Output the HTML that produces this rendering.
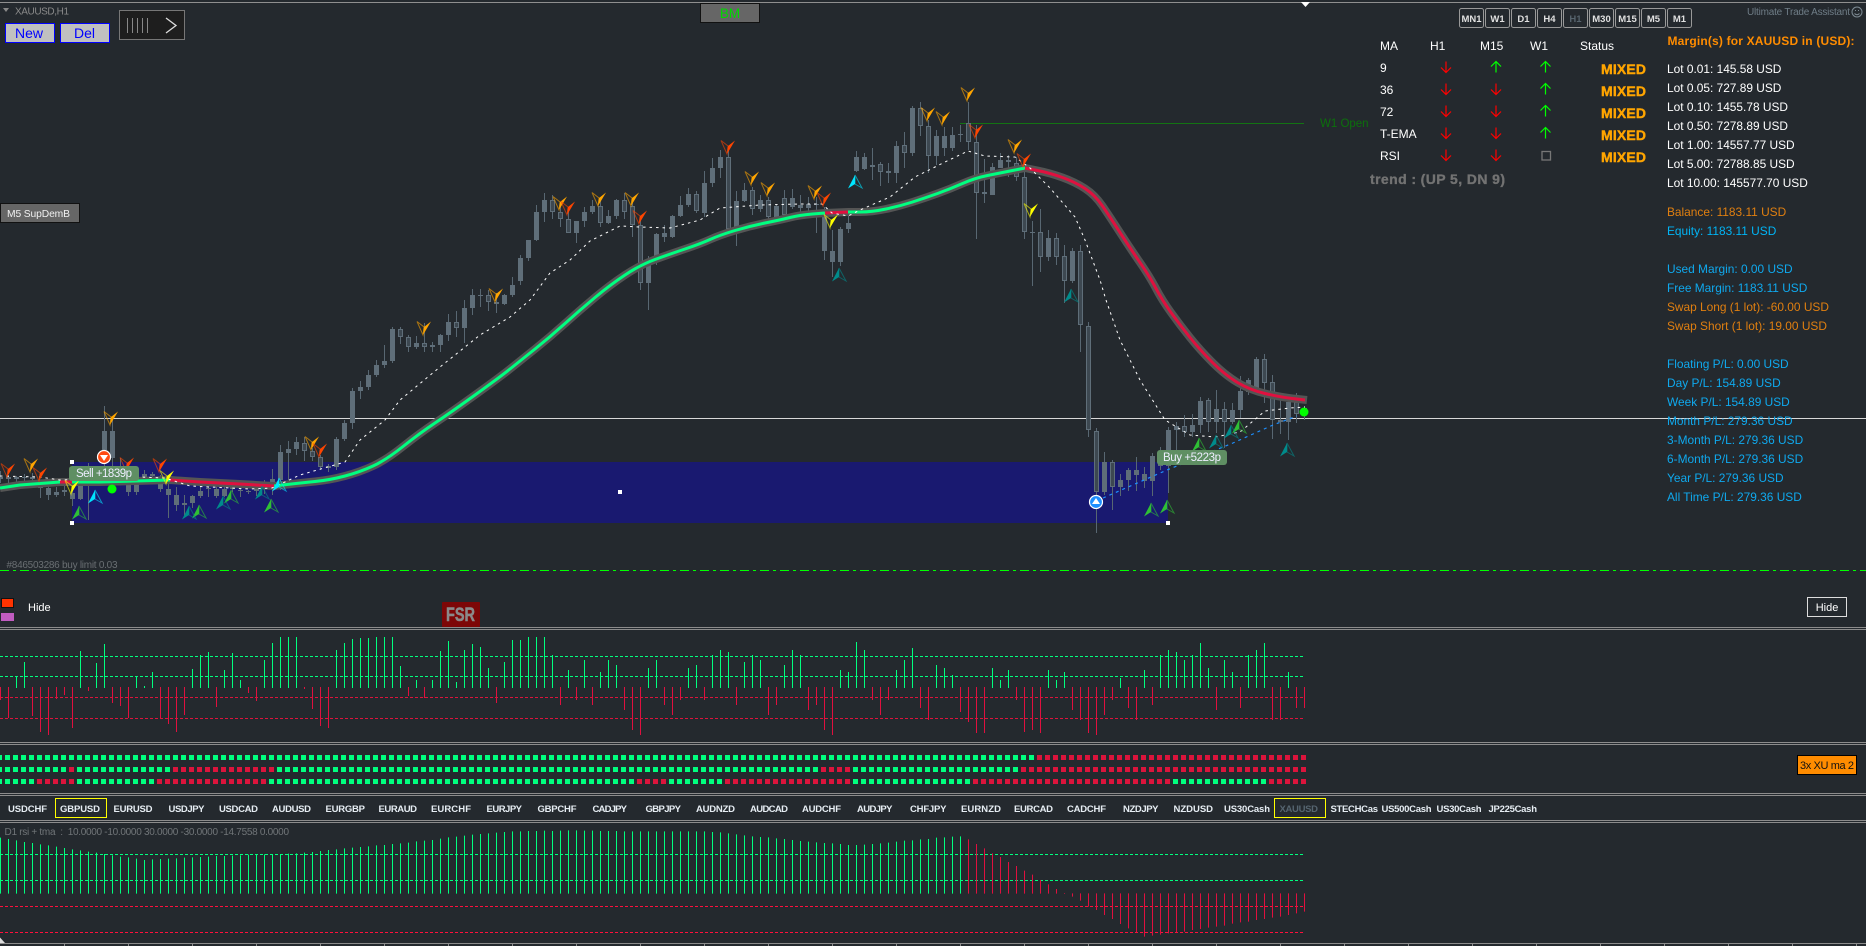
<!DOCTYPE html>
<html><head><meta charset="utf-8"><title>XAUUSD,H1</title>
<style>
html,body{margin:0;padding:0;background:#24292e;overflow:hidden}
svg{display:block}
text{font-family:"Liberation Sans",Arial,sans-serif}
.sy{font-size:9.5px;font-weight:700;fill:#e6edf3}
.tf{font-size:9.5px;font-weight:700;fill:#e0e0e0;text-anchor:middle}
.r{font-size:11.9px}
.w{fill:#fff}.b{fill:#0fa9ee}.o{fill:#e07f10}
.mx{font-size:14px;font-weight:700;fill:#ffa500;stroke:#ffa500;stroke-width:.4px}
.t{font-size:12px;fill:#fff}
</style></head><body>
<svg width="1866" height="946" viewBox="0 0 1866 946" xmlns="http://www.w3.org/2000/svg">
<defs>
<g id="d"><path d="M-7-6.500L0-1L-1 7Z" fill="none" stroke="currentColor" stroke-opacity=".6"/><path d="M7-6.500L0-1L-1 7Z" fill="currentColor"/></g>
<g id="u"><path d="M7 6L0 2L0-7Z" fill="none" stroke="currentColor" stroke-opacity=".6"/><path d="M-7 6.500L0 2L0-7Z" fill="currentColor"/></g>
<g id="ad" fill="none" stroke="#f00" stroke-width="1.2"><path d="M0-5.500V5.500M-5 .5L0 5.500L5 .5"/></g>
<g id="au" fill="none" stroke="#0f0" stroke-width="1.200"><path d="M0 5.500V-5.500M-5-.5L0-5.500L5-.5"/></g>
</defs>
<rect width="1866" height="946" fill="#24292e"/>
<rect y="2" width="1866" height="1" fill="#8f8f8f"/>
<path d="M1301 2H1310L1305.500 7Z" fill="#fff"/>

<!-- demand zone -->
<rect x="72" y="462" width="1096" height="61" fill="#191970"/>

<!-- horizontal levels -->
<rect y="418" width="1866" height="1" fill="#d8d8d8"/>
<rect x="960" y="123" width="344" height="1" fill="#137313"/>
<text x="1320" y="127" font-size="11.500" fill="#0c700c">W1 Open</text>
<path d="M0 570.500H1866" stroke="#0f0" stroke-width="1" stroke-dasharray="9 4 3 4" shape-rendering="crispEdges"/>

<!-- candles -->
<g transform="translate(.5 0)" shape-rendering="crispEdges" fill="none">
<path stroke="#586772" d="M0 471V483M8 475V485M16 476V482M24 474V483M32 473V484M40 480V498M48 483V500M56 487V497M64 480V496M72 480V506M80 470V500M88 463V520M96 470V483M104 406V470M112 418V466M120 458V484M128 462V496M136 470V495M144 470V480M152 472V480M160 475V492M168 480V518M176 487V511M184 495V517M192 495V508M200 485V498M208 480V497M216 487V498M224 487V497M232 484V492M240 487V497M248 490V494M256 487V496M264 480V494M272 469V495M280 445V490M288 441V480M296 437V455M304 437V461M312 448V461M320 455V470M328 464V472M336 437V470M344 420V441M352 388V429M360 381V399M368 370V390M376 360V377M384 345V368M392 327V363M400 327V344M408 335V352M416 336V349M424 323V352M432 342V352M440 334V352M448 314V341M456 311V337M464 300V343M472 289V315M480 289V307M488 290V311M496 293V313M504 294V305M512 277V297M520 255V285M528 240V261M536 205V241M544 193V222M552 195V219M560 207V227M568 207V233M576 221V243M584 207V227M592 200V214M600 200V227M608 210V224M616 199V219M624 193V219M632 200V237M640 220V290M648 256V310M656 233V265M664 225V242M672 215V238M680 196V217M688 188V207M696 191V213M704 171V217M712 158V187M720 150V178M728 150V232M736 191V246M744 183V202M752 187V215M760 195V212M768 197V219M776 205V222M784 190V218M792 189V209M800 195V212M808 197V212M816 197V233M824 207V260M832 230V277M840 227V266M848 213V233M856 151V172M864 153V170M872 148V180M880 162V186M888 163V183M896 141V183M904 132V168M912 106V156M920 102V136M928 120V173M936 130V165M944 127V156M952 127V151M960 125V142M968 102V150M976 125V239M984 159V203M992 163V195M1000 153V168M1008 155V177M1016 157V181M1024 170V239M1032 221V286M1040 209V272M1048 230V261M1056 233V265M1064 245V303M1072 248V283M1080 245V352M1088 322V437M1096 428V533M1104 452V495M1112 460V510M1120 474V496M1128 468V491M1136 457V491M1144 467V488M1152 453V496M1160 447V470M1168 427V493M1176 422V450M1184 415V437M1192 414V437M1200 397V433M1208 398V432M1216 390V433M1224 402V448M1232 403V424M1240 376V418M1248 378V395M1256 357V393M1264 354V403M1272 375V439M1280 400V434M1288 398V440M1296 393V423M1304 406V420"/>
<path stroke="#5f6e79" stroke-width="5" d="M0 477V479M8 477V479M16 477V479M24 477V478M32 477V479M40 485V488M48 488V495M56 492V495M64 490V492M72 493V499M80 485V499M88 470V478M96 475V480M104 431V450M112 431V458M120 470V480M128 483V492M136 483V492M144 474V477M152 474V476M160 484V489M168 489V495M176 495V505M184 503V505M192 496V503M200 491V496M208 488V489M216 489V496M224 489V496M232 487V489M240 490V491M248 491V492M256 488V491M264 484V487M272 479V483M280 452V480M288 449V453M296 442V449M304 443V451M312 451V457M320 457V467M328 466V468M336 439V467M344 423V439M352 391V423M360 387V391M368 375V387M376 365V375M384 361V365M392 329V361M400 329V337M408 337V347M416 343V347M424 343V347M432 345V347M440 335V345M448 322V335M456 322V328M464 308V328M472 295V308M480 295V296M488 295V302M496 302V304M504 295V304M512 285V295M520 258V281M528 240V258M536 212V240M544 200V212M552 200V212M560 212V219M568 219V233M576 221V233M584 212V221M592 206V212M600 206V223M608 216V223M616 200V216M624 200V212M632 206V225M640 225V283M648 265V283M656 234V257M664 233V237M672 216V237M680 205V216M688 194V205M696 194V211M704 183V213M712 168V183M720 157V168M728 157V229M736 201V229M744 190V201M752 190V209M760 200V209M768 200V217M776 206V217M784 198V215M792 198V207M800 205V208M808 204V208M816 204V205M824 216V251M832 251V262M840 229V262M848 223V229M856 157V171M864 157V169M872 165V167M880 164V172M888 171V173M896 146V173M904 145V153M912 108V153M920 108V126M928 126V156M936 136V156M944 136V148M952 135V148M960 134V135M968 123V142M976 142V193M984 192V194M992 167V195M1000 160V168M1008 160V162M1016 163V177M1024 177V232M1032 232V233M1040 232V257M1048 238V257M1056 238V257M1064 256V281M1072 251V281M1080 251V325M1088 326V430M1096 431V492M1104 462V492M1112 462V487M1120 480V487M1128 470V480M1136 470V475M1144 474V481M1152 456V481M1160 456V466M1168 430V466M1176 426V430M1184 426V432M1192 425V432M1200 401V425M1208 400V422M1216 409V422M1224 409V422M1232 410V422M1240 391V410M1248 380V392M1256 359V390M1264 359V383M1272 382V420M1280 420V422M1288 402V422M1296 402V414M1304 408V413"/>
<path stroke="#3d4851" stroke-width="3" d="M304 444V450M312 452V456M320 458V466M400 330V336M408 338V346M424 344V346M456 323V327M488 296V301M552 201V211M560 213V218M568 220V232M600 207V222M624 201V211M632 207V224M640 226V282M696 195V210M728 158V228M752 191V208M768 201V216M784 199V214M880 165V171M904 146V152M920 109V125M928 127V155M968 124V141M976 143V192M1016 164V176M1024 178V231M1040 233V256M1056 239V256M1064 257V280M1080 252V324M1088 327V429M1096 432V491M1112 463V486M1160 457V465M1184 427V431M1208 401V421M1224 410V421M1264 360V382M1272 383V419M1296 403V413"/>
</g>

<!-- MA ribbon -->
<g fill="none" stroke-linejoin="round">
<path stroke="#555" stroke-width="8" d="M0 488L20 485L60 482L100 482L170 480L200 482L240 484L274 486L287 484.500Q300 483 315 481.500Q330 480 345 476Q360 472 373 466Q386 460 403 446.500Q420 433 435 423Q450 413 475 395Q500 377 510 369Q520 361 535 349Q550 337 565 323.500Q580 310 595 297.500Q610 285 625 275Q640 265 655 259.500Q670 254 685 249Q700 244 710 239.500Q720 235 735 230.500Q750 226 765 223Q780 220 790 217.500Q800 215 812.500 214L825 213L848 212L860 212Q872 212 886 209Q900 206 912.500 202Q925 198 937.500 193.500Q950 189 962.500 183.500Q975 178 987.500 175.500Q1000 173 1012.500 170.500L1025 168L1037.500 170.500Q1050 173 1062.500 177.500Q1075 182 1085 188.500Q1095 195 1102.500 206Q1110 217 1120 232.500Q1130 248 1140 262.500Q1150 277 1156 288.500Q1162 300 1171 312.500Q1180 325 1190 337.500Q1200 350 1212.500 362.500Q1225 375 1237.500 382.500Q1250 390 1265 393.500Q1280 397 1292.500 398.500L1307 400"/>
<path stroke="#00ff80" stroke-width="3" d="M0 488L20 485L60 482L100 482L170 480M274 486L287 484.500Q300 483 315 481.500Q330 480 345 476Q360 472 373 466Q386 460 403 446.500Q420 433 435 423Q450 413 475 395Q500 377 510 369Q520 361 535 349Q550 337 565 323.500Q580 310 595 297.500Q610 285 625 275Q640 265 655 259.500Q670 254 685 249Q700 244 710 239.500Q720 235 735 230.500Q750 226 765 223Q780 220 790 217.500Q800 215 812.500 214L825 213M848 212L860 212Q872 212 886 209Q900 206 912.500 202Q925 198 937.500 193.500Q950 189 962.500 183.500Q975 178 987.500 175.500Q1000 173 1012.500 170.500L1025 168"/>
<path stroke="#e0103f" stroke-width="3" d="M60 482H72M170 480L200 482L240 484L274 486M825 213L848 212M1025 168L1037.500 170.500Q1050 173 1062.500 177.500Q1075 182 1085 188.500Q1095 195 1102.500 206Q1110 217 1120 232.500Q1130 248 1140 262.500Q1150 277 1156 288.500Q1162 300 1171 312.500Q1180 325 1190 337.500Q1200 350 1212.500 362.500Q1225 375 1237.500 382.500Q1250 390 1265 393.500Q1280 397 1292.500 398.500L1305 400"/>
<!-- TEMA dashed -->
<path stroke="#fff" stroke-width="1" stroke-dasharray="2.500 4" d="M0 476L40 477L60 480L140 477L165 478L190 486L250 489L272 488L300 475L345 462L360 440L385 420L400 400L440 367L480 335L510 317L530 300L550 273L570 260L590 241L620 226L640 227L670 228L700 220L720 208L760 205L800 204L822 204L832 213L848 216L860 210L890 197L915 177L945 162L968 151L985 156L1015 157L1030 168L1050 188L1075 217L1085 240L1100 280L1106 300L1120 340L1140 380L1165 420L1190 435L1215 437L1240 432L1265 411L1290 408L1305 407"/>
<!-- blue dashed -->
<path stroke="#1e90ff" stroke-width="1.200" stroke-dasharray="3 4" d="M1103 498L1167 470L1233 443L1273 425L1297 416"/>
</g>

<!-- zone handles -->
<g fill="#fff"><rect x="70" y="460" width="4" height="4"/><rect x="70" y="521" width="4" height="4"/><rect x="1166" y="521" width="4" height="4"/><rect x="618" y="490" width="4" height="4"/></g>

<!-- signal arrows -->
<g color="#ffa500"><use href="#d" x="31" y="465"/><use href="#d" x="111" y="418"/><use href="#d" x="312" y="443"/><use href="#d" x="424" y="328"/><use href="#d" x="496" y="295"/><use href="#d" x="560" y="203"/><use href="#d" x="599" y="199"/><use href="#d" x="632" y="199"/><use href="#d" x="752" y="178"/><use href="#d" x="768" y="189"/><use href="#d" x="815" y="192"/><use href="#d" x="928" y="114"/><use href="#d" x="943" y="118"/><use href="#d" x="968" y="94"/><use href="#d" x="1015" y="146"/></g>
<g color="#ff4500"><use href="#d" x="8" y="470"/><use href="#d" x="40" y="474"/><use href="#d" x="127" y="464"/><use href="#d" x="160" y="465"/><use href="#d" x="320" y="450"/><use href="#d" x="568" y="208"/><use href="#d" x="640" y="217"/><use href="#d" x="728" y="147"/><use href="#d" x="824" y="199"/><use href="#d" x="976" y="131"/><use href="#d" x="1024" y="160"/></g>
<g color="#ffff00"><use href="#d" x="72" y="487"/><use href="#d" x="167" y="477"/><use href="#d" x="831" y="221"/><use href="#d" x="1031" y="210"/></g>
<g color="#00e5ff"><use href="#u" x="95" y="497"/><use href="#u" x="279" y="485"/><use href="#u" x="855" y="182"/></g>
<g color="#2fbf35"><use href="#u" x="79" y="513"/><use href="#u" x="199" y="512"/><use href="#u" x="231" y="497"/><use href="#u" x="271" y="506"/><use href="#u" x="1151" y="510"/><use href="#u" x="1167" y="507"/><use href="#u" x="1199" y="445"/><use href="#u" x="1239" y="427"/></g>
<g color="#008b8b"><use href="#u" x="189" y="513"/><use href="#u" x="223" y="503"/><use href="#u" x="262" y="493"/><use href="#u" x="839" y="275"/><use href="#u" x="1071" y="296"/><use href="#u" x="1216" y="442"/><use href="#u" x="1231" y="432"/><use href="#u" x="1287" y="450"/></g>

<!-- trade markers -->
<circle cx="104" cy="457" r="6.500" fill="#ff4a12" stroke="#fff" stroke-width="1.200"/><path d="M100 455H108L104 461Z" fill="#fff"/>
<circle cx="1096" cy="502" r="6.500" fill="#1e90ff" stroke="#fff" stroke-width="1.200"/><path d="M1092 504H1100L1096 498Z" fill="#fff"/>
<circle cx="112" cy="489" r="4.500" fill="#0f0"/><circle cx="1304" cy="412" r="4.500" fill="#0f0"/>
<rect x="69" y="466" width="70" height="15" rx="3" fill="#5f8f63"/>
<text x="76" y="477" font-size="11.500" fill="#eef" textLength="56">Sell +1839p</text>
<rect x="1157" y="450" width="70" height="15" rx="3" fill="#5f8f63"/>
<text x="1163" y="461" font-size="11.500" fill="#eef" textLength="58">Buy +5223p</text>

<!-- top-left controls -->
<path d="M3 8H9L6 12Z" fill="#888"/>
<text x="15" y="14.500" font-size="10" fill="#8a8a8a" textLength="54">XAUUSD,H1</text>
<rect x="5.500" y="23.500" width="49" height="19" fill="#c0c0c0" stroke="#00f"/>
<text x="29" y="38" font-size="14" fill="#00f" text-anchor="middle">New</text>
<rect x="60.500" y="23.500" width="49" height="19" fill="#c0c0c0" stroke="#00f"/>
<text x="84.500" y="38" font-size="14" fill="#00f" text-anchor="middle">Del</text>
<rect x="119.500" y="10.500" width="65" height="29" fill="#1e1e1e" stroke="#777"/>
<path d="M127.500 18V33M132.500 18V33M137.500 18V33M142.500 18V33M147.500 18V33" stroke="#888" shape-rendering="crispEdges"/>
<path d="M166 18L176 25.500L166 33" fill="none" stroke="#ddd" stroke-width="1.300"/>
<rect x="700.500" y="3.500" width="59" height="19" fill="#666" stroke="#111"/>
<text x="730" y="18" font-size="13.500" fill="#00d800" text-anchor="middle">BM</text>
<rect x=".5" y="203.500" width="79" height="19" fill="#666" stroke="#111"/>
<text x="7" y="217" font-size="10.300" fill="#f0f0f0" textLength="63">M5 SupDemB</text>

<!-- timeframe buttons -->
<g fill="none" stroke="#999"><rect x="1459.500" y="8.500" width="24" height="19" rx="2"/><rect x="1485.500" y="8.500" width="24" height="19" rx="2"/><rect x="1511.500" y="8.500" width="24" height="19" rx="2"/><rect x="1537.500" y="8.500" width="24" height="19" rx="2"/><rect x="1563.500" y="8.500" width="24" height="19" rx="2"/><rect x="1589.500" y="8.500" width="24" height="19" rx="2"/><rect x="1615.500" y="8.500" width="24" height="19" rx="2"/><rect x="1641.500" y="8.500" width="24" height="19" rx="2"/><rect x="1667.500" y="8.500" width="24" height="19" rx="2"/></g>
<text class="tf" x="1471.500" y="22">MN1</text><text class="tf" x="1497.500" y="22">W1</text><text class="tf" x="1523.500" y="22">D1</text><text class="tf" x="1549.500" y="22">H4</text><text class="tf" x="1575.500" y="22" style="fill:#56636d">H1</text><text class="tf" x="1601.500" y="22">M30</text><text class="tf" x="1627.500" y="22">M15</text><text class="tf" x="1653.500" y="22">M5</text><text class="tf" x="1679.500" y="22">M1</text>
<text x="1747" y="15" font-size="10" fill="#6f7d87" textLength="103">Ultimate Trade Assistant</text>
<g fill="none" stroke="#7d8a93"><circle cx="1857" cy="12" r="5"/><path d="M1854.500 13.500Q1857 16 1859.500 13.500"/></g><path d="M1855 10h1v1h-1zM1858 10h1v1h-1z" fill="#7d8a93"/>

<!-- MA table -->
<text class="t" x="1380" y="50">MA</text><text class="t" x="1430" y="50">H1</text><text class="t" x="1480" y="50">M15</text><text class="t" x="1530" y="50">W1</text><text class="t" x="1580" y="50">Status</text>
<text class="t" x="1380" y="72">9</text><text class="t" x="1380" y="94">36</text><text class="t" x="1380" y="116">72</text><text class="t" x="1380" y="138">T-EMA</text><text class="t" x="1380" y="160">RSI</text>
<use href="#ad" x="1446" y="67"/><use href="#au" x="1496" y="67"/><use href="#au" x="1545.500" y="67"/>
<use href="#ad" x="1446" y="89"/><use href="#ad" x="1496" y="89"/><use href="#au" x="1545.500" y="89"/>
<use href="#ad" x="1446" y="111"/><use href="#ad" x="1496" y="111"/><use href="#au" x="1545.500" y="111"/>
<use href="#ad" x="1446" y="133"/><use href="#ad" x="1496" y="133"/><use href="#au" x="1545.500" y="133"/>
<use href="#ad" x="1446" y="155"/><use href="#ad" x="1496" y="155"/>
<rect x="1542" y="151.500" width="8.500" height="8.500" fill="none" stroke="#777" stroke-width="1.300"/>
<text class="mx" x="1601" y="74" textLength="45">MIXED</text><text class="mx" x="1601" y="96" textLength="45">MIXED</text><text class="mx" x="1601" y="118" textLength="45">MIXED</text><text class="mx" x="1601" y="140" textLength="45">MIXED</text><text class="mx" x="1601" y="162" textLength="45">MIXED</text>
<text x="1370" y="184" font-size="14" font-weight="700" fill="#727272" stroke="#727272" stroke-width=".35" textLength="135">trend : (UP 5, DN 9)</text>

<!-- account panel -->
<text x="1667.500" y="45" font-size="12" font-weight="700" fill="#ff8c00" textLength="187">Margin(s) for XAUUSD in (USD):</text>
<text class="r w" x="1667" y="73">Lot 0.01: 145.58 USD</text>
<text class="r w" x="1667" y="92">Lot 0.05: 727.89 USD</text>
<text class="r w" x="1667" y="111">Lot 0.10: 1455.78 USD</text>
<text class="r w" x="1667" y="130">Lot 0.50: 7278.89 USD</text>
<text class="r w" x="1667" y="149">Lot 1.00: 14557.77 USD</text>
<text class="r w" x="1667" y="168">Lot 5.00: 72788.85 USD</text>
<text class="r w" x="1667" y="187">Lot 10.00: 145577.70 USD</text>
<text class="r o" x="1667" y="216">Balance: 1183.11 USD</text>
<text class="r" x="1667" y="235" fill="#00b4f5">Equity: 1183.11 USD</text>
<text class="r b" x="1667" y="273">Used Margin: 0.00 USD</text>
<text class="r b" x="1667" y="292">Free Margin: 1183.11 USD</text>
<text class="r o" x="1667" y="311">Swap Long (1 lot): -60.00 USD</text>
<text class="r o" x="1667" y="330">Swap Short (1 lot): 19.00 USD</text>
<text class="r b" x="1667" y="368">Floating P/L: 0.00 USD</text>
<text class="r b" x="1667" y="387">Day P/L: 154.89 USD</text>
<text class="r b" x="1667" y="406">Week P/L: 154.89 USD</text>
<text class="r b" x="1667" y="425">Month P/L: 279.36 USD</text>
<text class="r b" x="1667" y="444">3-Month P/L: 279.36 USD</text>
<text class="r b" x="1667" y="463">6-Month P/L: 279.36 USD</text>
<text class="r b" x="1667" y="482">Year P/L: 279.36 USD</text>
<text class="r b" x="1667" y="501">All Time P/L: 279.36 USD</text>

<!-- order label, legend -->
<text x="6.500" y="568" font-size="10" fill="#6a6f73" textLength="111">#846503286 buy limit 0.03</text>
<rect x="1.500" y="598.500" width="12" height="9" fill="#ff3300" stroke="#111"/>
<rect x="1" y="613" width="13" height="8" fill="#c05cc0"/>
<text x="28" y="611" font-size="11" fill="#fff">Hide</text>
<rect x="442" y="602" width="38" height="25" rx="1" fill="#7d0707"/>
<text x="446" y="621" font-size="19" font-weight="700" fill="#8a8a8a" stroke="#8a8a8a" stroke-width=".5" textLength="29" lengthAdjust="spacingAndGlyphs">FSR</text>
<rect x="1807.500" y="597.500" width="39" height="19" fill="none" stroke="#ddd"/>
<text x="1827" y="611" font-size="11" fill="#fff" text-anchor="middle">Hide</text>

<!-- separators -->
<g fill="#8c8c8c"><rect y="627" width="1866" height="1"/><rect y="629" width="1866" height="1"/><rect y="742" width="1866" height="1"/><rect y="744" width="1866" height="1"/><rect y="793" width="1866" height="1"/><rect y="795" width="1866" height="1"/><rect y="820" width="1866" height="1"/><rect y="822" width="1866" height="1"/></g>

<!-- histogram panel 1 -->
<g fill="none" shape-rendering="crispEdges">
<path stroke="#00ff7f" stroke-dasharray="3 2" d="M0 656.500H1305M0 676.500H1305"/>
<path stroke="#dc143c" stroke-dasharray="3 2" d="M0 697.500H1305M0 718.500H1305"/>
<g transform="translate(.5 0)">
<path stroke="#00ff7f" d="M16 688V676M24 688V662M80 688V651M96 688V663M104 688V644M136 688V676M144 688V686M152 688V672M192 688V669M200 688V655M208 688V652M224 688V670M232 688V653M240 688V680M264 688V660M272 688V643M280 688V637M288 688V637M296 688V637M336 688V650M344 688V643M352 688V639M360 688V638M368 688V638M376 688V637M384 688V637M392 688V637M400 688V666M416 688V680M432 688V680M440 688V651M448 688V641M456 688V682M464 688V650M472 688V644M480 688V647M488 688V668M504 688V662M512 688V640M520 688V640M528 688V637M536 688V637M544 688V637M552 688V655M568 688V670M584 688V660M600 688V672M608 688V660M616 688V665M648 688V668M656 688V660M688 688V668M696 688V665M712 688V655M720 688V650M728 688V652M744 688V662M752 688V655M760 688V660M784 688V665M792 688V650M800 688V655M840 688V670M848 688V672M856 688V642M864 688V650M896 688V670M904 688V660M912 688V648M936 688V665M944 688V668M952 688V675M992 688V668M1000 688V680M1008 688V670M1048 688V670M1056 688V680M1064 688V672M1120 688V678M1144 688V670M1160 688V655M1168 688V650M1176 688V652M1184 688V660M1192 688V655M1200 688V643M1208 688V668M1224 688V660M1232 688V672M1248 688V655M1256 688V650M1264 688V643M1288 688V672"/>
<path stroke="#e0103f" d="M0 687V700M8 687V718M32 687V716M40 687V732M48 687V735M56 687V699M64 687V695M72 687V728M88 687V691M112 687V703M120 687V706M128 687V718M160 687V718M168 687V724M176 687V732M184 687V715M216 687V707M248 687V693M256 687V701M304 687V689M312 687V709M320 687V726M328 687V728M408 687V696M424 687V698M496 687V703M560 687V705M576 687V700M592 687V705M624 687V710M632 687V730M640 687V735M664 687V705M672 687V715M680 687V700M704 687V700M736 687V705M768 687V715M776 687V705M808 687V710M816 687V705M824 687V730M832 687V735M872 687V700M880 687V715M888 687V700M920 687V708M928 687V720M960 687V712M968 687V722M976 687V733M984 687V733M1016 687V700M1024 687V732M1032 687V730M1040 687V733M1072 687V710M1080 687V720M1088 687V733M1096 687V735M1104 687V715M1112 687V700M1128 687V708M1136 687V720M1152 687V705M1216 687V710M1240 687V708M1272 687V720M1280 687V720M1296 687V708M1304 687V708"/>
</g>

<!-- square rows -->
<g stroke-width="5" stroke-dasharray="5 3">
<path stroke="#00ff7f" d="M-3 757.500H1037"/>
<path stroke="#dc143c" d="M1037 757.500H1309"/>
<path stroke="#00ff7f" d="M-3 769.500H69M77 769.500H173M277 769.500H821M853 769.500H1021"/>
<path stroke="#dc143c" d="M69 769.500H77M173 769.500H277M821 769.500H853M1021 769.500H1309"/>
<path stroke="#00ff7f" d="M-3 781.500H37M77 781.500H157M269 781.500H637M669 781.500H725M853 781.500H973M1173 781.500H1269"/>
<path stroke="#dc143c" d="M37 781.500H77M157 781.500H269M637 781.500H669M725 781.500H853M973 781.500H1173M1269 781.500H1309"/>
</g>

<!-- RSI panel -->
<path stroke="#00ff7f" stroke-dasharray="3 2" d="M0 854.500H1305M0 880.500H1305"/>
<path stroke="#ff0f3c" stroke-dasharray="3 2" d="M0 906.500H1305M0 932.500H1305"/>
</g>
<g transform="translate(.5 730) scale(1 .33333)" fill="none" shape-rendering="crispEdges" stroke-width="1">
<path stroke="#00ff7f" d="M0 323V491M8 327V491M16 331V491M24 336V491M32 339V491M40 343V491M48 346V491M56 350V491M64 354V491M72 358V491M80 361V491M88 365V491M96 368V491M104 372V491M112 376V491M120 380V491M128 382V491M136 386V491M144 390V491M152 388V491M160 387V491M168 386V491M176 385V491M184 383V491M192 382V491M200 381V491M208 380V491M216 378V491M224 378V491M232 377V491M240 376V491M248 374V491M256 373V491M264 373V491M272 372V491M280 372V491M288 371V491M296 370V491M304 368V491M312 366V491M320 363V491M328 360V491M336 358V491M344 355V491M352 353V491M360 351V491M368 349V491M376 346V491M384 345V491M392 342V491M400 340V491M408 338V491M416 334V491M424 332V491M432 330V491M440 326V491M448 322V491M456 320V491M464 317V491M472 314V491M480 312V491M488 310V491M496 308V491M504 306V491M512 304V491M520 304V491M528 303V491M536 303V491M544 302V491M552 303V491M560 302V491M568 301V491M576 301V491M584 302V491M592 302V491M600 303V491M608 303V491M616 303V491M624 304V491M632 304V491M640 304V491M648 304V491M656 304V491M664 304V491M672 304V491M680 304V491M688 304V491M696 304V491M704 304V491M712 306V491M720 307V491M728 310V491M736 313V491M744 316V491M752 319V491M760 321V491M768 322V491M776 325V491M784 327V491M792 330V491M800 333V491M808 335V491M816 337V491M824 339V491M832 340V491M840 342V491M848 345V491M856 345V491M864 344V491M872 342V491M880 340V491M888 338V491M896 335V491M904 332V491M912 331V491M920 328V491M928 327V491M936 323V491M944 322V491M952 320V491M960 319V491"/>
<path stroke="#e0103f" d="M968 328V491M976 342V491M984 355V491M992 370V491M1000 381V491M1008 396V491M1016 408V491M1024 422V491M1032 434V491M1040 450V491M1048 463V491M1056 477V491M1064 489V491M1072 490V500M1080 490V512M1088 490V530M1096 490V540M1104 490V555M1112 490V567M1120 490V582M1128 490V595M1136 490V607M1144 490V620M1152 490V617M1160 490V614M1168 490V610M1176 490V607M1184 490V605M1192 490V600M1200 490V597M1208 490V593M1216 490V590M1224 490V587M1232 490V581M1240 490V577M1248 490V575M1256 490V570M1264 490V567M1272 490V563M1280 490V560M1288 490V555M1296 490V550M1304 490V545"/>
</g>
<text x="4.500" y="835" font-size="10" fill="#707578" textLength="284.500" xml:space="preserve">D1 rsi + tma  :  10.0000 -10.0000 30.0000 -30.0000 -14.7558 0.0000</text>

<!-- 3x button -->
<rect x="1797.500" y="755.500" width="59" height="19" fill="#ff8c00" stroke="#000"/>
<text x="1827" y="769" font-size="11" fill="#111" text-anchor="middle" textLength="54">3x XU ma 2</text>

<!-- symbols bar -->
<rect x="55.500" y="798.500" width="51" height="19" fill="none" stroke="#ffff00"/>
<rect x="1274.500" y="798.500" width="51" height="19" fill="none" stroke="#ffff00"/>
<g>
<text class="sy" x="8" y="812" textLength="39">USDCHF</text>
<text class="sy" x="60" y="812" textLength="40">GBPUSD</text>
<text class="sy" x="113.500" y="812" textLength="39">EURUSD</text>
<text class="sy" x="168.500" y="812" textLength="36">USDJPY</text>
<text class="sy" x="219" y="812" textLength="39">USDCAD</text>
<text class="sy" x="272" y="812" textLength="39">AUDUSD</text>
<text class="sy" x="325.500" y="812" textLength="39.500">EURGBP</text>
<text class="sy" x="378.500" y="812" textLength="38.500">EURAUD</text>
<text class="sy" x="431" y="812" textLength="40">EURCHF</text>
<text class="sy" x="486.500" y="812" textLength="35.500">EURJPY</text>
<text class="sy" x="537.500" y="812" textLength="39">GBPCHF</text>
<text class="sy" x="592.500" y="812" textLength="34.500">CADJPY</text>
<text class="sy" x="645.500" y="812" textLength="35.500">GBPJPY</text>
<text class="sy" x="696" y="812" textLength="39">AUDNZD</text>
<text class="sy" x="750" y="812" textLength="38">AUDCAD</text>
<text class="sy" x="802" y="812" textLength="39">AUDCHF</text>
<text class="sy" x="857" y="812" textLength="35.500">AUDJPY</text>
<text class="sy" x="910" y="812" textLength="36.500">CHFJPY</text>
<text class="sy" x="961" y="812" textLength="40">EURNZD</text>
<text class="sy" x="1014" y="812" textLength="39">EURCAD</text>
<text class="sy" x="1067" y="812" textLength="39">CADCHF</text>
<text class="sy" x="1123" y="812" textLength="35.500">NZDJPY</text>
<text class="sy" x="1173.500" y="812" textLength="39.500">NZDUSD</text>
<text class="sy" x="1224" y="812" textLength="46">US30Cash</text>
<text class="sy" x="1279.500" y="812" textLength="38.500" style="fill:#566570">XAUUSD</text>
<text class="sy" x="1330.500" y="812" textLength="47.500">STECHCas</text>
<text class="sy" x="1381.500" y="812" textLength="50">US500Cash</text>
<text class="sy" x="1436.500" y="812" textLength="45">US30Cash</text>
<text class="sy" x="1488.500" y="812" textLength="48.500">JP225Cash</text>
</g>

<!-- bottom axis -->
<path d="M0 937.500L5 943H0Z" fill="#ddd"/>
<rect y="943" width="1866" height="1" fill="#8c8c8c"/>
<path stroke="#8c8c8c" shape-rendering="crispEdges" d="M64.500 943V946M128.500 943V946M192.500 943V946M256.500 943V946M320.500 943V946M384.500 943V946M448.500 943V946M512.500 943V946M576.500 943V946M640.500 943V946M704.500 943V946M768.500 943V946M832.500 943V946M896.500 943V946M960.500 943V946M1024.500 943V946M1088.500 943V946M1152.500 943V946M1216.500 943V946M1280.500 943V946M1344.500 943V946M1408.500 943V946M1472.500 943V946M1536.500 943V946M1600.500 943V946M1664.500 943V946M1728.500 943V946M1792.500 943V946M1856.500 943V946"/>
</svg>
</body></html>
